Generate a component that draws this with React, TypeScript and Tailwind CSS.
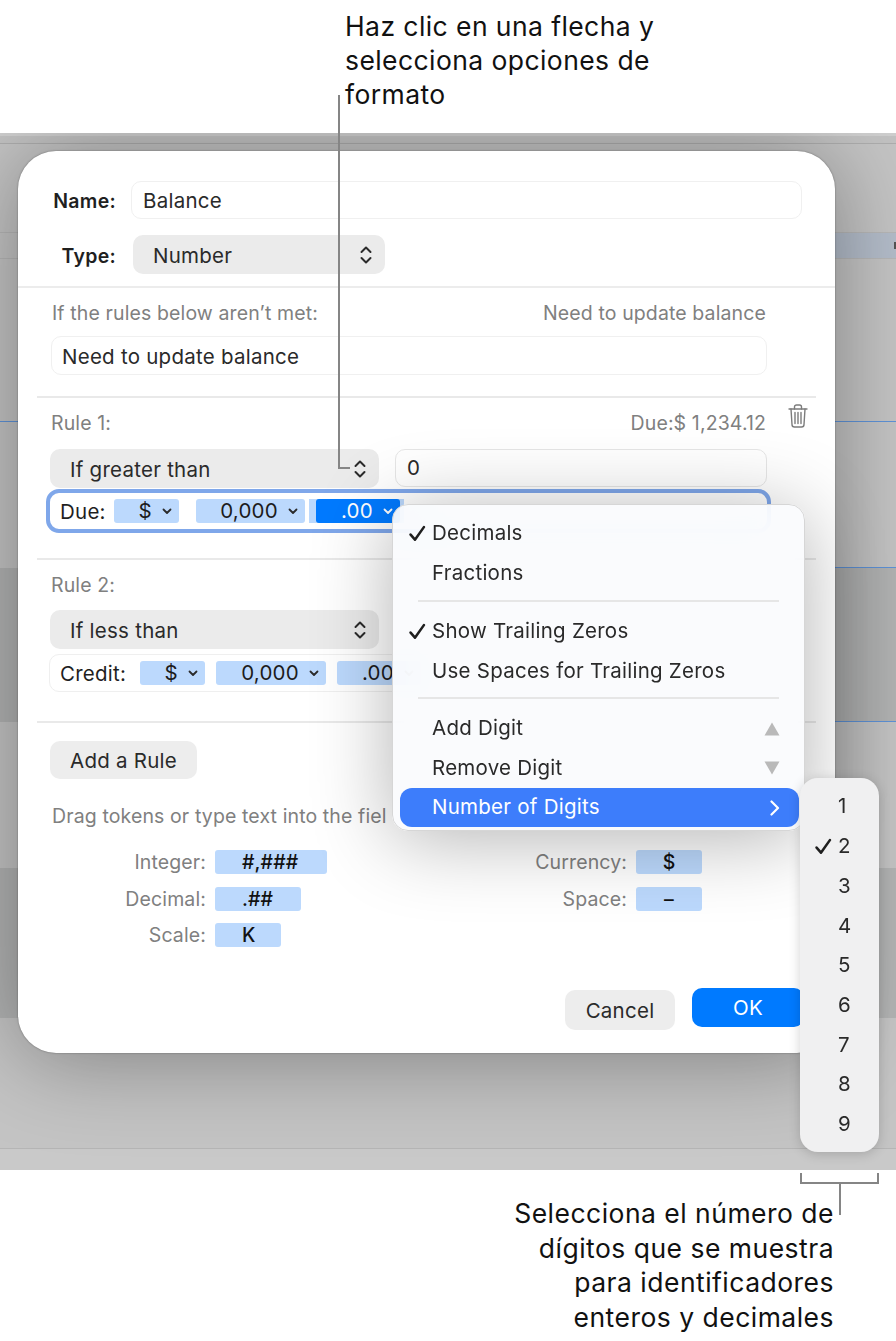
const FONT = "font-['Inter','Liberation_Sans',sans-serif]"
const HINT = 'text-[19.500px] leading-[24px] tracking-[0.12px] text-[#808080]'

function UpDown({ className = '' }: { className?: string }) {
  return (
    <svg width="12" height="20" viewBox="0 0 12 20" fill="none" stroke="#2b2b2b" strokeWidth="2" strokeLinecap="round" strokeLinejoin="round" className={className}>
      <path d="M1.500 7 6 2.500 10.500 7" />
      <path d="M1.500 13 6 17.500 10.500 13" />
    </svg>
  )
}

function Down({ color = '#2b2b2b' }: { color?: string }) {
  return (
    <svg width="10" height="7" viewBox="0 0 10 7" fill="none" stroke={color} strokeWidth="1.800" strokeLinecap="round" strokeLinejoin="round">
      <path d="M1.500 1.500 5 5 8.500 1.500" />
    </svg>
  )
}

function Check() {
  return (
    <svg width="17" height="17" viewBox="0 0 16 16" fill="none" stroke="#1f1f1f" strokeWidth="2.400" strokeLinecap="round" strokeLinejoin="round">
      <path d="M1.500 9 5.600 13.800 14 2" />
    </svg>
  )
}

function Trash() {
  return (
    <svg width="20" height="24" viewBox="0 0 20 24" fill="none" stroke="#7c7c7c" strokeWidth="1.400" strokeLinecap="round" strokeLinejoin="round">
      <path d="M1 5h18" />
      <path d="M6.500 5V3a2 2 0 0 1 2-2h3a2 2 0 0 1 2 2v2" />
      <path d="M3 5l1 15.500A2.500 2.500 0 0 0 6.500 23h7a2.500 2.500 0 0 0 2.500-2.500L17 5" />
      <path d="M7 8.500v11M10 8.500v11M13 8.500v11" />
    </svg>
  )
}

function Select({ label, w, cls }: { label: string; w: string; cls: string }) {
  return (
    <div className={`flex h-[39px] items-center justify-between rounded-[10px] bg-[#ebebeb] pr-[13px] text-[#2a2a2a] ${w} ${cls}`}>
      <span className="pt-[4px]">{label}</span>
      <UpDown />
    </div>
  )
}

function Token({ label, w, active }: { label: string; w: string; active?: boolean }) {
  return (
    <div className={`flex h-6 shrink-0 items-center justify-end gap-[10px] rounded-[3px] pr-[7px] ${w} ${active ? 'bg-[#007aff] text-white' : 'bg-[#bcd9fd] text-[#1c1c1c]'}`}>
      <span>{label}</span>
      <Down color={active ? '#ffffff' : '#2b2b2b'} />
    </div>
  )
}

function Chip({ label, w }: { label: string; w: string }) {
  return (
    <div className={`flex h-6 items-center justify-start rounded-[3px] bg-[#bcd9fd] pl-[27px] font-medium text-[#111] ${w}`}>
      {label}
    </div>
  )
}

function Divider() {
  return <div className="mx-[19px] h-[2px] bg-[#e9e9e9]" />
}

function BlueLine({ h, cls = '', left }: { h: string; cls?: string; left?: boolean }) {
  return (
    <div className={`flex items-end justify-between ${h} ${cls}`}>
      <div className={`h-px w-[18px] ${left ? 'bg-[#5f93d8]' : ''}`} />
      <div className="h-px w-[61px] bg-[#5f93d8]" />
    </div>
  )
}

function MenuRow({ label, checked, right }: { label: string; checked?: boolean; right?: React.ReactNode }) {
  return (
    <div className="relative flex h-[39.500px] items-center justify-between pl-[32px] pr-[17px] text-[#2a2a2a]">
      {checked && <span className="absolute left-[9px] top-[11px]"><Check /></span>}
      <span>{label}</span>
      {right}
    </div>
  )
}

export default function App() {
  return (
    <div className={`${FONT} relative flex h-[1341px] w-[896px] flex-col overflow-hidden bg-white text-[20.500px] tracking-[0.25px]`}>
      {/* caption top */}
      <div className="h-[133px] pl-[345px] pt-[9px] text-[26.500px] leading-[34px] tracking-[0.42px] text-[#111]">
        <p>Haz clic en una flecha y</p>
        <p>selecciona opciones de</p>
        <p>formato</p>
      </div>

      {/* window behind the dialog */}
      <div className="relative h-[1037px] overflow-hidden bg-[#c4c4c4]">
        <div className="flex h-full flex-col">
          <div className="h-[3px] bg-[#cfcfcf]" />
          <div className="h-[7px] bg-[#c2c2c2]" />
          <div className="h-[89px] border-t border-[#adadad]" />
          <div className="h-[27px] border-y border-[#a9a9a9]/50">
            <div className="ml-[835px] flex h-full justify-end bg-[#b4bdca] py-[9px]">
              <div className="w-[2px] bg-[#555]" />
            </div>
          </div>
          <BlueLine h="h-[163px]" left />
          <BlueLine h="h-[146px]" />
          <BlueLine h="h-[154px]" cls="bg-[#b2b3b3]" />
          <div className="h-[146px]" />
          <div className="h-[150px] bg-[#b2b3b3]" />
          <div className="h-[130px]" />
          <div className="flex-1 border-t border-[#b5b5b5] bg-[#c9c9c9]" />
        </div>

        {/* dialog */}
        <div className="absolute left-[18px] top-[18px] flex h-[902px] w-[817px] flex-col rounded-[38px] bg-white pt-[30px] shadow-[0_4px_90px_rgba(0,0,0,0.36),0_0_2px_rgba(0,0,0,0.4)]">
          <div className="flex items-center">
            <span className="w-[98px] pt-[4px] text-right text-[19.500px] font-semibold tracking-[0.3px] text-[#1f1f1f]">Name:</span>
            <div className="ml-[15px] flex h-[38px] w-[671px] items-center rounded-[10px] border border-[#f0f0f0] pl-[11px] pt-[2px] text-[#2a2a2a]">Balance</div>
          </div>
          <div className="mt-[16px] flex items-center">
            <span className="w-[98px] pt-[4px] text-right text-[19.500px] font-semibold tracking-[0.3px] text-[#1f1f1f]">Type:</span>
            <Select label="Number" w="w-[252px]" cls="ml-[17px] pl-[20px]" />
          </div>
          <div className="mt-[12px] h-[2px] bg-[#ececec]" />

          <div className={`mt-[13px] flex items-center justify-between pl-[34px] pr-[69px] ${HINT}`}>
            <span>If the rules below aren’t met:</span>
            <span>Need to update balance</span>
          </div>
          <div className="ml-[33px] mt-[11px] flex h-[39px] w-[716px] items-center rounded-[10px] border border-[#f0f0f0] pl-[10px] pt-[3px] text-[#2a2a2a]">Need to update balance</div>
          <div className="mt-[21px]"><Divider /></div>

          <div className={`relative mt-[13px] flex items-center justify-between pl-[33px] pr-[69px] ${HINT}`}>
            <span>Rule 1:</span>
            <span>Due:$ 1,234.12</span>
            <span className="absolute right-[27px] top-[-7px]"><Trash /></span>
          </div>
          <div className="ml-[32px] mt-[14px] flex items-start gap-[16px]">
            <Select label="If greater than" w="w-[329px]" cls="pl-[20px]" />
            <div className="flex h-[38px] w-[372px] items-center rounded-[10px] border border-[#e6e6e6] pl-[11px] text-[#2a2a2a]">0</div>
          </div>
          <div className="ml-[28px] mt-[1px] flex h-[44px] w-[725px] items-center rounded-[13px] border-[4px] border-[#7fa7ea] bg-white pl-[10px] text-[#1f1f1f]">
            <span className="w-[54px] pt-[2px]">Due:</span>
            <Token label="$" w="w-[65px]" />
            <div className="ml-[17px]"><Token label="0,000" w="w-[109px]" /></div>
            <div className="ml-[4px] flex h-6 w-[95px] items-center justify-end bg-[#bcd9fd] pr-[4px]">
              <Token label=".00" w="w-[84px]" active />
            </div>
          </div>
          <div className="mt-[25px]"><Divider /></div>

          <div className={`mt-[13px] pl-[33px] ${HINT}`}>Rule 2:</div>
          <div className="ml-[32px] mt-[13px]">
            <Select label="If less than" w="w-[329px]" cls="pl-[20px]" />
          </div>
          <div className="ml-[31px] mt-[5px] flex h-[38px] w-[720px] items-center overflow-hidden rounded-[10px] border border-[#efefef] pl-[10px] text-[#1f1f1f]">
            <span className="w-[80px] pt-[2px]">Credit:</span>
            <Token label="$" w="w-[65px]" />
            <div className="ml-[11px]"><Token label="0,000" w="w-[110px]" /></div>
            <div className="ml-[11px]"><Token label=".00" w="w-[84px]" /></div>
          </div>
          <div className="mt-[29px]"><Divider /></div>

          <div className="ml-[32px] mt-[18px] flex h-[38px] w-[147px] items-center justify-center rounded-[10px] bg-[#ededed] pt-[2px] text-[#2a2a2a]">Add a Rule</div>
          <div className={`ml-[34px] mt-[25px] whitespace-nowrap ${HINT}`}>Drag tokens or type text into the fiel</div>

          <div className={`mt-[22px] flex ${HINT}`}>
            <div className="grid w-[309px] grid-cols-[188px_auto] items-center justify-start gap-x-[9px] gap-y-[12.500px]">
              <span className="text-right">Integer:</span>
              <Chip label="#,###" w="w-[112px]" />
              <span className="text-right">Decimal:</span>
              <Chip label=".##" w="w-[86px]" />
              <span className="text-right">Scale:</span>
              <Chip label="K" w="w-[66px]" />
            </div>
            <div className="grid grid-cols-[300px_66px] items-center gap-x-[9px] gap-y-[12.500px] self-start">
              <span className="text-right">Currency:</span>
              <div className="flex h-6 items-center justify-center rounded-[3px] bg-[#bcd9fd] font-medium text-[#111]">$</div>
              <span className="text-right">Space:</span>
              <div className="flex h-6 items-center justify-center rounded-[3px] bg-[#bcd9fd] font-medium text-[#111]">–</div>
            </div>
          </div>

          <div className="ml-[547px] mt-[41px] flex items-start gap-[17px]">
            <div className="mt-[2px] flex h-[40px] w-[110px] items-center justify-center rounded-[10px] bg-[#ededed] pt-[2px] text-[#2a2a2a]">Cancel</div>
            <div className="flex h-[39px] w-[112px] items-center justify-center rounded-[10px] bg-[#007aff] pt-[2px] text-white">OK</div>
          </div>
        </div>

        {/* format menu */}
        <div className="absolute left-[392px] top-[371px] w-[413px] rounded-[16px] border border-[#d6d6d6] bg-[#fafbfd]/90 pb-[3px] pl-[7px] pr-[5px] pt-[9px] shadow-[0_8px_80px_rgba(0,0,0,0.3)] backdrop-blur-xl">
          <MenuRow label="Decimals" checked />
          <MenuRow label="Fractions" />
          <div className="mb-[10px] ml-[18px] mr-[20px] mt-[7px] h-[2px] bg-[#e6e6e6]" />
          <MenuRow label="Show Trailing Zeros" checked />
          <MenuRow label="Use Spaces for Trailing Zeros" />
          <div className="mb-[10px] ml-[18px] mr-[20px] mt-[6px] h-[2px] bg-[#e6e6e6]" />
          <MenuRow
            label="Add Digit"
            right={<svg width="16" height="14" viewBox="0 0 16 14" fill="#b9b9b9" className="mr-[2px]"><path d="M8 0.500 15.500 13.500H0.500Z" /></svg>}
          />
          <MenuRow
            label="Remove Digit"
            right={<svg width="16" height="14" viewBox="0 0 16 14" fill="#b9b9b9" className="mr-[2px]"><path d="M8 13.500 15.500 0.500H0.500Z" /></svg>}
          />
          <div className="flex h-[39px] items-center justify-between rounded-[12px] bg-[#3d7dfb] pl-[32px] pr-[19px] text-white">
            <span>Number of Digits</span>
            <svg width="10" height="16" viewBox="0 0 10 16" fill="none" stroke="#fff" strokeWidth="2.200" strokeLinecap="round" strokeLinejoin="round"><path d="M1.500 1.500 8 8 1.500 14.500" /></svg>
          </div>
        </div>

        {/* digits submenu */}
        <div className="absolute left-[800px] top-[645px] flex w-[79px] flex-col items-center rounded-[18px] bg-[#f0f0f1] pb-[8px] pt-[9px] text-[#2a2a2a] shadow-[0_2px_12px_rgba(0,0,0,0.18)]">
          {[1, 2, 3, 4, 5, 6, 7, 8, 9].map(n => (
            <div key={n} className="relative flex h-[39.700px] w-full items-center pl-[38px]">
              {n === 2 && <span className="absolute left-[15px] top-[11px]"><Check /></span>}
              {n}
            </div>
          ))}
        </div>
      </div>

      {/* caption bottom */}
      <div className="flex-1 pr-[62px] pt-[26px] text-right text-[26.500px] leading-[34.700px] tracking-[0.48px] text-[#111]">
        <p>Selecciona el número de</p>
        <p>dígitos que se muestra</p>
        <p>para identificadores</p>
        <p>enteros y decimales</p>
      </div>

      {/* callout lines */}
      <div className="absolute left-[338px] top-[95px] h-[374px] w-[12px] border-b-2 border-l-2 border-[#858585]" />
      <div className="absolute left-[800px] top-[1173px] h-[11px] w-[79px] border-x-2 border-b-2 border-[#858585]" />
      <div className="absolute left-[839px] top-[1184px] h-[31px] w-[2px] bg-[#858585]" />
    </div>
  )
}
